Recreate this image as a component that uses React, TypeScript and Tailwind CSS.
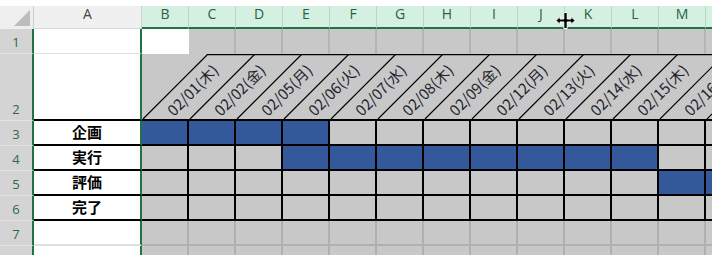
import React from 'react';

const GREEN = '#217346';
const BLUE = '#34599a';

const dates = [
  '02/01(木)', '02/02(金)', '02/05(月)', '02/06(火)', '02/07(水)', '02/08(木)',
  '02/09(金)', '02/12(月)', '02/13(火)', '02/14(水)', '02/15(木)', '02/16(金)', '02/19(月)',
];
const letters = ['B', 'C', 'D', 'E', 'F', 'G', 'H', 'I', 'J', 'K', 'L', 'M', 'N'];

// tasks: label + [from, to] column index (inclusive)
const tasks: { name: string; from: number; to: number }[] = [
  { name: '企画', from: 0, to: 3 },
  { name: '実行', from: 3, to: 10 },
  { name: '評価', from: 11, to: 12 },
  { name: '完了', from: -1, to: -1 },
];

const RowHead = ({ n }: { n: number }) => (
  <div className="flex items-end justify-center pb-[2px] bg-[#d4d4d4] border-r-2 border-r-[#217346] border-b border-b-[#e4e4e4] text-[13px] leading-[18px] text-[#2b6a45] font-['Open_Sans',sans-serif]">
    {n}
  </div>
);

const DiagonalHeader = () => {
  const w = 47;
  return (
    <svg width={13 * w} height={65} className="block">
      <line x1={66} y1={0.5} x2={13 * w} y2={0.5} stroke="#000" strokeWidth={1.3} />
      {dates.map((d, i) => {
        const x = i * w + 1;
        const tx = x + 31;
        const ty = 63;
        return (
          <g key={d}>
            <line x1={x} y1={65} x2={x + 65} y2={0} stroke="#000" strokeWidth={1.2} />
            <text
              x={tx}
              y={ty}
              transform={`rotate(-45 ${tx} ${ty})`}
              fontSize={15}
              fill="#1f1f2e"
              fontFamily="'Noto Sans CJK JP', sans-serif"
            >
              {d}
            </text>
          </g>
        );
      })}
    </svg>
  );
};

const ResizeCursor = () => (
  <svg width={21} height={19} viewBox="0 0 21 19" className="absolute left-[555px] top-[11px]">
    <path
      d="M1 9.5 L5 5.5 L5 8 L8.8 8 L8.8 1.5 L12.2 1.5 L12.2 8 L16 8 L16 5.5 L20 9.5 L16 13.5 L16 11 L12.2 11 L12.2 17.5 L8.8 17.5 L8.8 11 L5 11 L5 13.5 Z"
      fill="#000"
      stroke="#fff"
      strokeWidth={1}
    />
  </svg>
);

export default function App() {
  return (
    <div className="relative w-[712px] h-[255px] overflow-hidden bg-white">
      <div className="h-[6px] bg-white" />
      <div className="grid grid-cols-[34px_108px_repeat(13,47px)] grid-rows-[23px_25px_67px_repeat(6,25px)]">
        {/* column headers */}
        <div className="relative bg-[#efefef] border-r border-[#d0d0d0]">
          <svg width={16} height={16} className="absolute right-[3px] bottom-[3px]">
            <polygon points="16,0 16,16 0,16" fill="#bdbdbd" />
          </svg>
        </div>
        <div className="flex justify-center bg-[#f0f0f0] border-r border-[#d0d0d0] border-b border-b-[#d6d6d6] text-[14px] leading-[16px] text-[#444] font-['Open_Sans',sans-serif]">
          A
        </div>
        {letters.map((l) => (
          <div
            key={l}
            className="flex justify-center bg-[#d3f0e0] border-r border-r-[#b7d7c4] border-b-2 border-b-[#217346] text-[14px] leading-[16px] text-[#2d5e46] font-['Open_Sans',sans-serif]"
          >
            {l}
          </div>
        ))}

        {/* row 1 */}
        <RowHead n={1} />
        <div className="bg-white border-r-2 border-r-[#217346] border-b border-b-[#e1e1e1]" />
        {letters.map((l, i) => (
          <div key={l} className={i === 0 ? 'bg-white' : 'bg-[#c8c8c8] border-r-2 border-[#b4b4b4]'} />
        ))}

        {/* row 2 */}
        <RowHead n={2} />
        <div className="bg-white border-r-2 border-r-[#217346] border-b-2 border-b-black" />
        <div className="col-span-13 bg-[#c8c8c8] border-b-2 border-black overflow-hidden">
          <DiagonalHeader />
        </div>

        {/* rows 3-6 */}
        {tasks.map((t, r) => (
          <React.Fragment key={t.name}>
            <RowHead n={r + 3} />
            <div className="flex items-center justify-center bg-white border-r-2 border-r-[#217346] border-b-2 border-b-black text-[15px] font-bold text-black font-['Noto_Sans_CJK_JP',sans-serif]">
              {t.name}
            </div>
            {letters.map((l, i) => (
              <div
                key={l}
                className={`border-r-2 border-b-2 border-black ${i >= t.from && i <= t.to ? 'bg-[#34599a]' : 'bg-[#c8c8c8]'}`}
              />
            ))}
          </React.Fragment>
        ))}

        {/* rows 7-8 */}
        {[7, 8].map((n) => (
          <React.Fragment key={n}>
            <RowHead n={n} />
            <div className="bg-white border-r-2 border-r-[#217346] border-b-2 border-b-[#e1e1e1]" />
            {letters.map((l) => (
              <div key={l} className="bg-[#c8c8c8] border-r-2 border-b-2 border-[#b0b0b0]" />
            ))}
          </React.Fragment>
        ))}
      </div>
      <ResizeCursor />
    </div>
  );
}
